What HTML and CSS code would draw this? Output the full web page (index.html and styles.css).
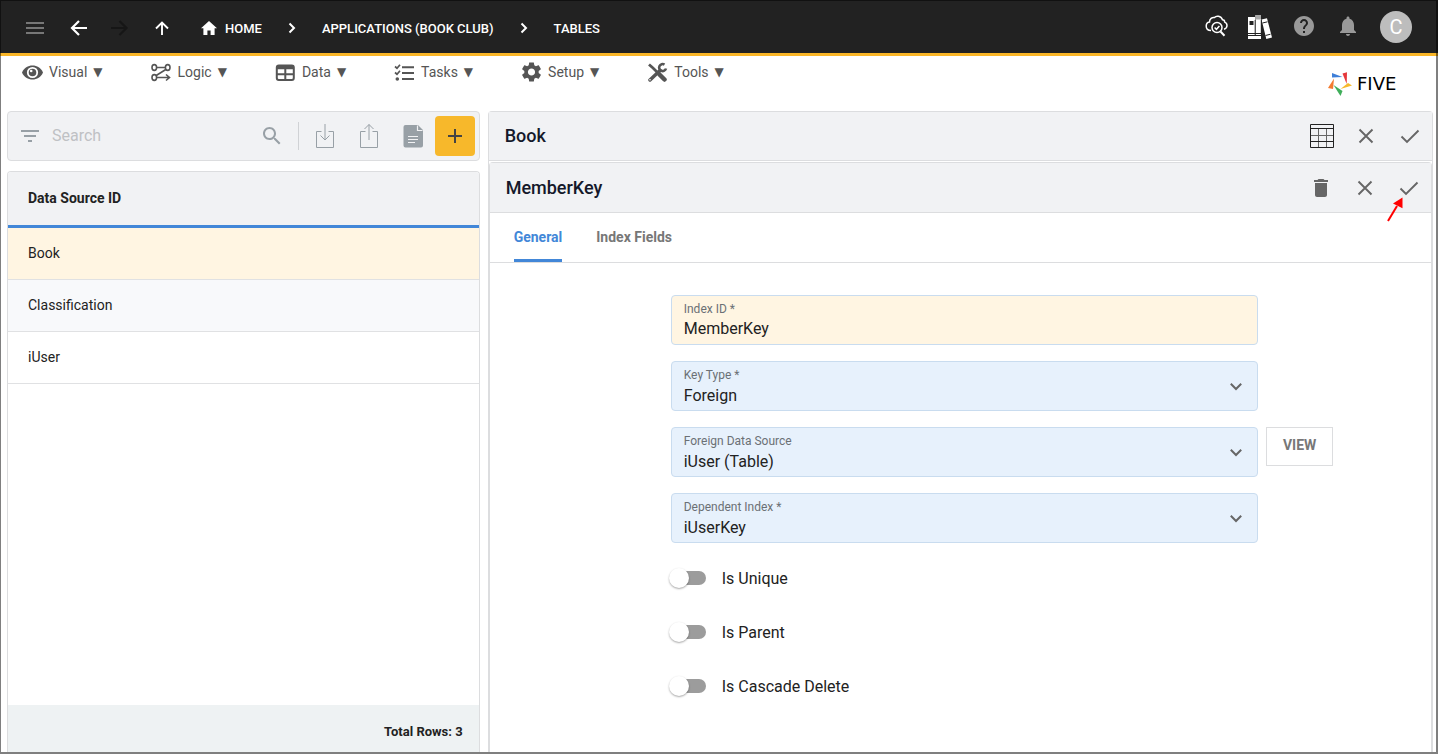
FILE: index.html
```html
<!DOCTYPE html>
<html lang="en">
<head>
<meta charset="utf-8">
<title>Five - Tables</title>
<link rel="stylesheet" href="styles.css">
</head>
<body>
<header class="topbar">
  <div class="nav-icons">
    <button class="nav-btn dim" aria-label="Menu"><svg viewBox="0 0 24 24" width="24" height="24"><path d="M3 7h18M3 12h18M3 17h18" stroke="currentColor" stroke-width="2"/></svg></button>
    <button class="nav-btn" aria-label="Back"><svg viewBox="0 0 24 24" width="24" height="24"><path d="M22 12H7M14 5L7 12l7 7" fill="none" stroke="currentColor" stroke-width="2.200"/></svg></button>
    <button class="nav-btn off" aria-label="Forward" disabled><svg viewBox="0 0 24 24" width="24" height="24"><path d="M4 12h15M12.500 5l7 7-7 7" fill="none" stroke="currentColor" stroke-width="2.200"/></svg></button>
    <button class="nav-btn" aria-label="Up"><svg viewBox="0 0 24 24" width="24" height="24"><path d="M13 19V6.500M7 12.500l6-6 6 6" fill="none" stroke="currentColor" stroke-width="1.900"/></svg></button>
  </div>
  <nav class="crumbs" aria-label="Breadcrumb">
    <a class="crumb" href="#"><svg viewBox="0 0 16 14" width="16" height="14"><path d="M8 0L0 7.200h2.400V14h4V9.500h3.200V14h4V7.200H16z" fill="currentColor"/></svg>HOME</a>
    <svg class="sep" viewBox="0 0 8 12" width="8" height="12"><path d="M1.500 1.500L6 6l-4.500 4.500" fill="none" stroke="currentColor" stroke-width="2"/></svg>
    <a class="crumb" href="#">APPLICATIONS (BOOK CLUB)</a>
    <svg class="sep" viewBox="0 0 8 12" width="8" height="12"><path d="M1.500 1.500L6 6l-4.500 4.500" fill="none" stroke="currentColor" stroke-width="2"/></svg>
    <a class="crumb" href="#">TABLES</a>
  </nav>
  <div class="top-actions">
    <button class="top-btn" aria-label="Inspect"><svg viewBox="0 0 24 24" width="24" height="24"><g fill="none" stroke="currentColor" stroke-width="1.500"><path d="M7 15.500C4 15.500 2.200 13.500 2.200 11c0-2.200 1.500-3.700 3.300-4C5.600 4 8 2 10.500 2.500 12 .7 17 .5 18.500 4.800c1.500 0 2.200 1 2.200 2.300 1.600.6 2.300 2 2.300 3.500 0 1.900-1.200 3.200-3 3.600"/><circle cx="13" cy="12.500" r="5"/><path d="M16.500 16.500l4 4.300" stroke-width="2"/><path d="M10.600 12.500l1.800 1.800 3-3.400"/></g></svg></button>
    <button class="top-btn" aria-label="Library"><svg viewBox="0 0 24 24" width="24" height="24"><path d="M0 2h7v18H0zM7.500 0H13v20H7.500zM13.500 4.500l5.500-1.300 5 19.300-5.700 1.400z" fill="currentColor"/><path d="M7.500 0H13v4.500H7.500z" fill="#aaa"/><path d="M1.500 6h4v4h-4zM6.700 5h.8v19h-.8z" fill="#222"/><path d="M0 21h13v3H0z" fill="currentColor"/><path d="M0 18.500h13M14.500 8l5-1.200M17.500 20.500l5-1.300M13.300 5v16" stroke="#222" stroke-width="1" fill="none"/></svg></button>
    <button class="top-btn gray" aria-label="Help"><svg viewBox="0 0 24 24" width="24" height="24"><path fill="currentColor" d="M12 1C6.480 1 2 5.480 2 11s4.480 10 10 10 10-4.480 10-10S17.520 1 12 1zm1 17h-2v-2h2v2zm2.070-7.750l-.9.920C13.450 11.900 13 12.500 13 14h-2v-.5c0-1.100.45-2.100 1.170-2.830l1.240-1.260c.37-.36.590-.86.590-1.410 0-1.100-.9-2-2-2s-2 .9-2 2H8c0-2.210 1.790-4 4-4s4 1.790 4 4c0 .88-.36 1.680-.93 2.250z"/></svg></button>
    <button class="top-btn gray" aria-label="Notifications"><svg viewBox="0 0 24 24" width="24" height="24"><path fill="currentColor" d="M12 21c1.100 0 2-.9 2-2h-4c0 1.100.9 2 2 2zm6-6v-5c0-3.070-1.640-5.640-4.500-6.320V3c0-.83-.67-1.500-1.500-1.500s-1.500.67-1.500 1.500v.68C7.630 4.360 6 6.920 6 10v5l-2 2v1h16v-1l-2-2z"/></svg></button>
    <button class="avatar">C</button>
  </div>
</header>

<div class="menubar">
  <nav class="menus" aria-label="Main">
    <button class="menu"><svg viewBox="0 0 21 20" width="21" height="20"><path d="M0 10.500C2 5.800 6 3.500 10.500 3.500S19 5.800 21 10.500C19 15.200 15 17.500 10.500 17.500S2 15.200 0 10.500z" fill="currentColor"/><circle cx="10.500" cy="10.500" r="4.700" fill="none" stroke="#fff" stroke-width="1.800"/><circle cx="9.200" cy="9" r="1.300" fill="#fff"/></svg>Visual <span class="caret">▼</span></button>
    <button class="menu"><svg viewBox="0 0 21 20" width="21" height="20"><g fill="none" stroke="currentColor" stroke-width="1.600"><ellipse cx="3.300" cy="5.500" rx="2.300" ry="2.900"/><ellipse cx="16.700" cy="5.500" rx="2.300" ry="2.900"/><ellipse cx="3.300" cy="15.500" rx="2.300" ry="2.900"/><path d="M5.600 5.500h8.800M14.800 7.500L5.200 13.500M5.600 15.500H18M15 12.500l3.500 3-3.500 3"/></g></svg>Logic <span class="caret">▼</span></button>
    <button class="menu"><svg viewBox="0 0 21 20" width="21" height="20"><rect x="1.800" y="3.500" width="17" height="14.500" rx="2" fill="none" stroke="currentColor" stroke-width="2"/><path d="M2 12.300h17M10.300 5v12" stroke="currentColor" stroke-width="2"/><path d="M2 5.500h17" stroke="currentColor" stroke-width="3.500"/></svg>Data <span class="caret">▼</span></button>
    <button class="menu"><svg viewBox="0 0 21 20" width="21" height="20"><g fill="none" stroke="currentColor"><path d="M8 5.300h12M8 11h12M8 17h12" stroke-width="2"/><path d="M1 4.500l2 1.700 3-3.400M1 10.500l2 1.700 3-3.400" stroke-width="1.700"/></g><circle cx="3.300" cy="17" r="1.800" fill="currentColor"/></svg>Tasks <span class="caret">▼</span></button>
    <button class="menu"><svg viewBox="2 2 20 20" width="21" height="20"><path fill="currentColor" d="M19.140 12.940c.04-.3.060-.61.060-.94 0-.32-.02-.64-.07-.94l2.030-1.580c.18-.14.230-.41.120-.61l-1.920-3.320c-.12-.22-.37-.29-.59-.22l-2.390.96c-.5-.38-1.030-.7-1.620-.94L14.400 2.810c-.04-.24-.24-.41-.48-.41h-3.840c-.24 0-.43.170-.47.410L9.250 5.350c-.59.240-1.130.57-1.620.94l-2.390-.96c-.22-.08-.47 0-.59.220L2.740 8.870c-.12.210-.08.470.12.610l2.030 1.580c-.05.300-.09.630-.09.940s.02.640.07.940l-2.030 1.580c-.18.140-.23.410-.12.610l1.920 3.320c.12.220.37.290.59.220l2.390-.96c.5.380 1.030.7 1.620.94l.36 2.540c.05.240.24.410.48.410h3.840c.24 0 .44-.17.470-.41l.36-2.540c.59-.24 1.130-.56 1.620-.94l2.390.96c.22.080.47 0 .59-.22l1.920-3.320c.12-.22.070-.47-.12-.61l-2.010-1.580zM12 15.600c-1.980 0-3.600-1.620-3.600-3.600s1.620-3.600 3.600-3.600 3.600 1.620 3.600 3.600-1.620 3.600-3.600 3.600z"/></svg>Setup <span class="caret">▼</span></button>
    <button class="menu"><svg viewBox="0 0 21 20" width="21" height="20"><g fill="none" stroke="currentColor"><path d="M3 18L13 8.500" stroke-width="3.500" stroke-linecap="round"/><path d="M17.500 2.600A3.500 3.500 0 1 0 19 6.500" stroke-width="2.600"/><path d="M2 2.500l4 3.500 5 5" stroke-width="2.800"/><path d="M12.500 12.500l5 5" stroke-width="4.500" stroke-linecap="round"/></g><circle cx="3" cy="17.800" r=".8" fill="#fff"/></svg>Tools <span class="caret">▼</span></button>
  </nav>
  <div class="brand">
    <svg viewBox="0 0 24 24" width="24" height="24"><path d="M4 1l10.500 4L4 5.500z" fill="#3f7fd8"/><path d="M14.500 1.500L19 .3 18.700 12z" fill="#e5383b"/><path d="M24 13.500L12.500 17l7.500-6z" fill="#f7b92b"/><path d="M5.500 13L14.500 19l-2 5z" fill="#3fae5a"/><path d="M6 6.500L5 17l-5-1z" fill="#f47b30"/></svg>
    <span class="wordmark">FIVE</span>
  </div>
</div>

<main class="workspace">
  <section class="list">
    <form class="searchbar">
      <button type="button" class="filter" aria-label="Filter"><svg viewBox="0 0 24 24" width="24" height="24"><path d="M3 7h18M6 12h12M10 17h4" stroke="currentColor" stroke-width="2"/></svg></button>
      <input class="search" type="text" placeholder="Search" aria-label="Search">
      <button type="button" class="find" aria-label="Run search"><svg viewBox="0 0 24 24" width="24" height="24"><path fill="currentColor" d="M15.500 14h-.79l-.28-.27C15.410 12.590 16 11.110 16 9.500 16 5.910 13.090 3 9.500 3S3 5.910 3 9.500 5.910 16 9.500 16c1.610 0 3.090-.59 4.230-1.570l.27.28v.79l5 4.990L20.490 19l-4.990-5zm-6 0C7.010 14 5 11.990 5 9.500S7.010 5 9.500 5 14 7.010 14 9.500 11.990 14 9.500 14z"/></svg></button>
      <span class="rule"></span>
      <button type="button" class="tool" aria-label="Import"><svg viewBox="0 0 24 26" width="24" height="26"><g fill="none" stroke="currentColor" stroke-width="1"><path d="M8.500 8.500h-5v16h17v-16h-5M12 1v16M7.500 12.500L12 17l4.500-4.500"/></g></svg></button>
      <button type="button" class="tool" aria-label="Export"><svg viewBox="0 0 24 26" width="24" height="26"><g fill="none" stroke="currentColor" stroke-width="1"><path d="M8.500 8.500h-5v16h17v-16h-5M12 17V1.500M7.500 6L12 1.500 16.500 6"/></g></svg></button>
      <button type="button" class="tool" aria-label="Report"><svg viewBox="0 0 24 26" width="24" height="26"><path d="M4.500 2H17l5 5v15.500a2 2 0 0 1-2 2H4.500a2 2 0 0 1-2-2V4a2 2 0 0 1 2-2z" fill="currentColor"/><path d="M16.500 2.500V7.500h5M7 13.500h10M7 16.500h10M7 19.500h7" fill="none" stroke="#f1f2f4" stroke-width="1.200"/></svg></button>
      <button type="button" class="add" aria-label="Add"><svg viewBox="0 0 24 24" width="24" height="24"><path d="M5 12h14M12 5v14" stroke="currentColor" stroke-width="2"/></svg></button>
    </form>
    <div class="grid">
      <table class="sources">
        <thead><tr><th scope="col">Data Source ID</th></tr></thead>
        <tbody>
          <tr class="picked"><td>Book</td></tr>
          <tr class="alt"><td>Classification</td></tr>
          <tr><td>iUser</td></tr>
        </tbody>
      </table>
      <div class="total">Total Rows: 3</div>
    </div>
  </section>

  <section class="detail">
    <div class="panel-head">
      <h1>Book</h1>
      <button class="act" aria-label="Table view"><svg viewBox="0 0 24 24" width="24" height="24"><path d="M1 11.500h22M8.500 5v18M16.500 5v18" stroke="#666" stroke-width="1"/><path d="M.5.500h23v23H.5zM.5 4.500h23M.5 17.500h23" fill="none" stroke="#222" stroke-width="1"/></svg></button>
      <button class="act" aria-label="Cancel"><svg viewBox="0 0 24 24" width="24" height="24"><path d="M5.500 5.500l13 13M18.500 5.500l-13 13" stroke="currentColor" stroke-width="1.900"/></svg></button>
      <button class="act" aria-label="Save"><svg viewBox="0 0 24 24" width="24" height="24"><path d="M3.500 12.500l5.500 5.500L20.500 6.500" fill="none" stroke="currentColor" stroke-width="1.900"/></svg></button>
    </div>
    <div class="subpanel">
      <div class="panel-head sub">
        <h2>MemberKey</h2>
        <button class="act" aria-label="Delete"><svg viewBox="0 0 24 24" width="24" height="24"><path fill="currentColor" d="M6 19c0 1.100.9 2 2 2h8c1.100 0 2-.9 2-2V7H6v12zM19 4h-3.500l-1-1h-5l-1 1H5v2h14V4z"/></svg></button>
        <button class="act" aria-label="Cancel"><svg viewBox="0 0 24 24" width="24" height="24"><path d="M5.500 5.500l13 13M18.500 5.500l-13 13" stroke="currentColor" stroke-width="1.900"/></svg></button>
        <button class="act" aria-label="Save"><svg viewBox="0 0 24 24" width="24" height="24"><path d="M3.500 12.500l5.500 5.500L20.500 6.500" fill="none" stroke="currentColor" stroke-width="1.900"/></svg><svg class="pointer" viewBox="0 0 16 26" width="16" height="26"><path d="M1 25L10 10" stroke="#f00" stroke-width="2"/><path d="M15.500 1.500v10.800L6 7.500z" fill="#f00"/></svg></button>
      </div>
      <div class="tabs" role="tablist">
        <button class="tab on" role="tab" aria-selected="true">General</button>
        <button class="tab" role="tab" aria-selected="false">Index Fields</button>
      </div>
      <form class="fields">
        <div class="field key"><label for="index-id">Index ID *</label><input id="index-id" type="text" value="MemberKey"></div>
        <div class="field"><label for="key-type">Key Type *</label><select id="key-type"><option>Foreign</option></select><svg class="chev" viewBox="0 0 12 8" width="12" height="8"><path d="M.8.8L6 6 11.200.8" fill="none" stroke="currentColor" stroke-width="2"/></svg></div>
        <div class="field"><label for="source">Foreign Data Source</label><select id="source"><option>iUser (Table)</option></select><svg class="chev" viewBox="0 0 12 8" width="12" height="8"><path d="M.8.8L6 6 11.200.8" fill="none" stroke="currentColor" stroke-width="2"/></svg></div>
        <button type="button" class="view">VIEW</button>
        <div class="field"><label for="dependent">Dependent Index *</label><select id="dependent"><option>iUserKey</option></select><svg class="chev" viewBox="0 0 12 8" width="12" height="8"><path d="M.8.8L6 6 11.200.8" fill="none" stroke="currentColor" stroke-width="2"/></svg></div>
        <div class="switches">
          <label class="switch"><input type="checkbox">Is Unique</label>
          <label class="switch"><input type="checkbox">Is Parent</label>
          <label class="switch"><input type="checkbox">Is Cascade Delete</label>
        </div>
      </form>
    </div>
  </section>
</main>
</body>
</html>
```
FILE: styles.css
```css
* { box-sizing: border-box; }
body {
  margin: 0;
  min-height: 100vh;
  display: flex;
  flex-direction: column;
  background: #fff;
  color: #222;
  font-family: Roboto, "Liberation Sans", sans-serif;
  font-size: 14px;
}
body::after {
  content: "";
  position: fixed;
  inset: 0;
  border: 1px solid rgba(0, 0, 0, .5);
  border-right-width: 2px;
  border-bottom-width: 2px;
  pointer-events: none;
}
button, input, select { font: inherit; color: inherit; }
button { border: 0; padding: 0; background: none; cursor: pointer; }
svg { display: block; flex: none; }

.topbar {
  display: flex;
  align-items: center;
  height: 56px;
  padding: 0 26px 0 14px;
  background: #222;
  border-bottom: 3px solid #fab627;
  color: #fff;
}
.nav-icons { display: flex; padding-top: 3px; }
.nav-btn { width: 42px; height: 42px; display: grid; place-items: center; }
.dim { color: #777; }
.off { color: #161616; }
.crumbs { display: flex; align-items: center; padding-top: 3px; margin-left: 19px; font-size: 13px; font-weight: 500; }
.crumb { display: flex; align-items: center; gap: 8px; color: inherit; text-decoration: none; }
.sep { margin: 0 26px; }
.top-actions { display: flex; align-items: center; margin-left: auto; }
.top-btn { width: 44px; height: 44px; display: grid; place-items: center; }
.gray { color: #999; }
.avatar { width: 32px; height: 32px; margin-left: 10px; border-radius: 50%; background: #bdbdbd; font-size: 20px; }

.menubar { display: flex; justify-content: space-between; height: 55px; padding: 6px 22px 0 22px; }
.menus { display: flex; align-items: flex-start; gap: 48px; }
.menu { display: flex; align-items: center; gap: 6px; height: 20px; color: #555; }
.caret { font: 12px/20px "DejaVu Sans", sans-serif; }
.brand { display: flex; align-items: center; gap: 5px; height: 24px; margin-top: 10px; }
.wordmark { min-width: 59px; font: 18px/24px "DejaVu Sans", sans-serif; color: #000; }

.workspace {
  flex: 1;
  display: grid;
  grid-template-columns: minmax(0, 1fr) minmax(0, 2fr);
  gap: 8px;
  padding: 0 5px 2px 7px;
}
.list { display: flex; flex-direction: column; gap: 10px; }
.searchbar {
  display: flex;
  align-items: center;
  height: 50px;
  padding-right: 4px;
  border: 1px solid #dcdddf;
  border-radius: 4px;
  background: #f1f2f4;
  color: #98a0a6;
}
.filter { width: 44px; display: grid; place-items: center; }
.search { flex: 1; min-width: 0; border: 0; padding: 0 0 2px; outline: 0; background: none; font-size: 16px; }
.search::placeholder { color: #bfc1c4; opacity: 1; }
.find { padding: 0 14px; }
.rule { width: 1px; height: 28px; margin-right: 4px; background: #d0d2d5; }
.tool { width: 44px; display: grid; place-items: center; }
.add { width: 40px; height: 40px; display: grid; place-items: center; border-radius: 4px; background: #f7b82b; color: #444; }
.grid { flex: 1; display: flex; flex-direction: column; border: 1px solid #dcdddf; border-bottom: 0; border-radius: 4px 4px 0 0; overflow: hidden; }
.sources { width: 100%; border-collapse: separate; border-spacing: 0; }
.sources th { height: 56px; padding: 0 20px 2px; border-bottom: 3px solid #4287d8; background: #f1f2f4; text-align: left; font-weight: 700; }
.sources td { height: 52px; padding: 0 20px 2px; border-bottom: 1px solid #e0e1e3; }
.picked { background: #fff5e2; }
.alt { background: #f8f9fb; }
.total { margin-top: auto; height: 47px; padding: 0 16px; background: #eef2f3; font-size: 13px; font-weight: 700; line-height: 54px; text-align: right; }

.detail { display: flex; flex-direction: column; border: 1px solid #dcdddf; border-bottom: 0; border-radius: 4px 4px 0 0; }
.panel-head { display: flex; align-items: center; height: 49px; padding-left: 16px; border-bottom: 1px solid #dcdddf; background: #f1f2f4; color: #666; }
.panel-head h1, .panel-head h2 { flex: 1; margin: 0; padding-bottom: 1px; color: #15192a; font-size: 18px; font-weight: 500; }
.sub { height: 50px; }
.act { position: relative; width: 44px; height: 48px; display: grid; place-items: center; }
.pointer { position: absolute; left: 0; top: 32px; }
.subpanel { flex: 1; margin-top: 1px; border: 1px solid #dcdddf; border-bottom: 0; border-radius: 4px 4px 0 0; }
.tabs { display: flex; gap: 34px; height: 50px; padding-left: 24px; border-bottom: 1px solid #dcdddf; }
.tab { padding-top: 2px; border-bottom: 3px solid transparent; color: #777; font-weight: 700; }
.on { color: #4287d8; border-color: #4287d8; }

.fields { display: grid; grid-template-columns: 173fr 587fr 165fr; gap: 16px 8px; align-items: start; padding-top: 32px; }
.field { grid-column: 2; position: relative; height: 50px; border: 1px solid #c9dcef; border-radius: 4px; background: #e7f1fc; }
.key { background: #fff5e2; }
.field label { position: absolute; left: 12px; top: 5px; color: #6b7075; font-size: 12px; line-height: 16px; pointer-events: none; }
.field input, .field select { display: block; width: 100%; height: 48px; padding: 18px 12px 0; border: 0; outline: 0; background: none; font-size: 16px; appearance: none; }
.field input { padding-top: 16px; }
.chev { position: absolute; right: 15px; top: 21px; color: #666; pointer-events: none; }
.view { grid-column: 3; justify-self: start; height: 39px; padding: 0 16px 3px; border: 1px solid #dcdddf; color: #777; font-weight: 700; }
.switches { grid-column: 2; display: grid; gap: 30px; padding-top: 7px; }
.switch { display: flex; align-items: center; gap: 16px; height: 24px; font-size: 16px; }
.switch input { position: relative; width: 34px; height: 14px; margin: 0 0 0 1px; border-radius: 7px; background: #9c9c9c; appearance: none; }
.switch input::before { content: ""; position: absolute; left: -3px; top: -3px; width: 20px; height: 20px; border-radius: 50%; background: #fff; box-shadow: 0 1px 2px rgba(0, 0, 0, .35); }
.switch input:checked::before { left: 17px; }
```
